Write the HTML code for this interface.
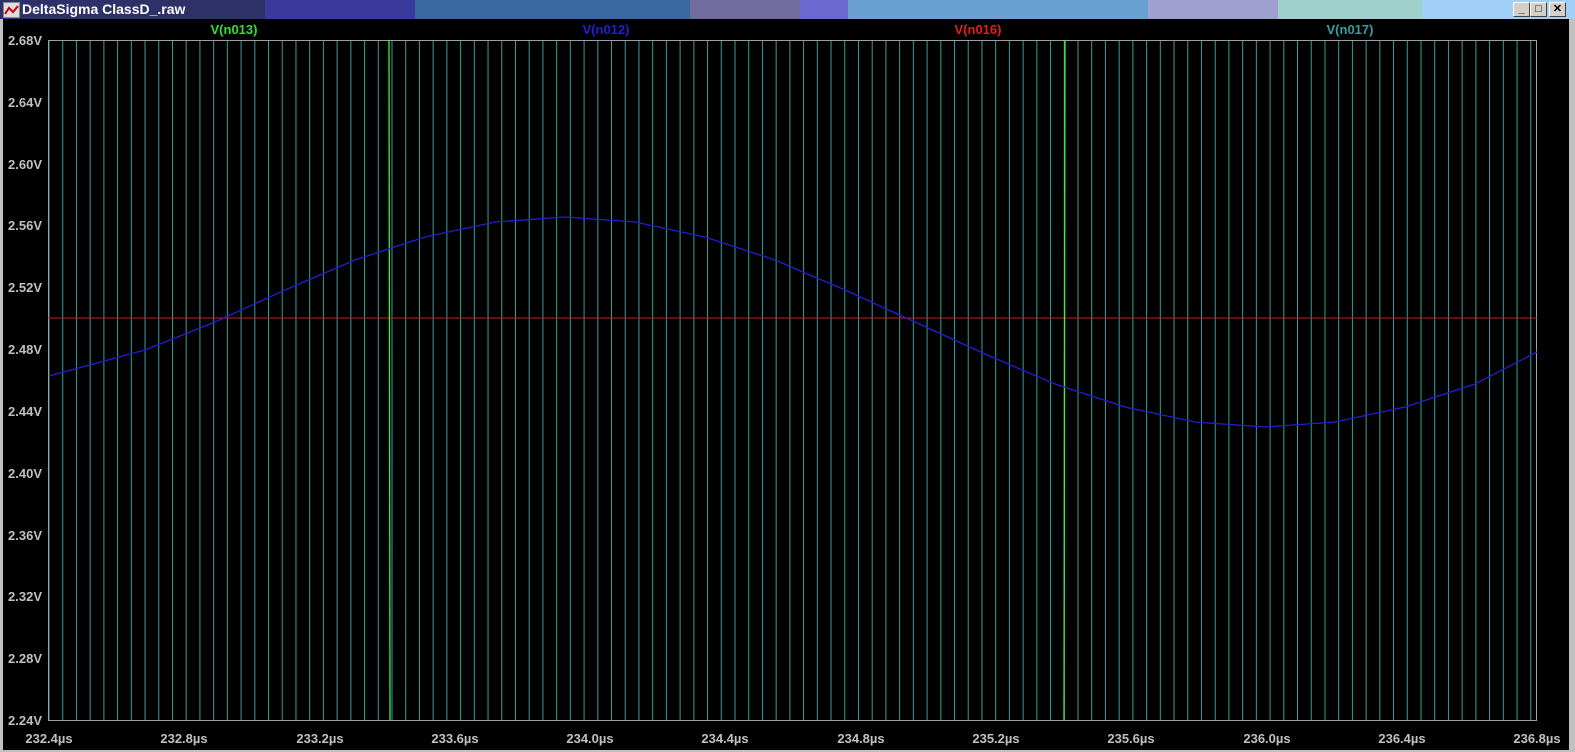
<!DOCTYPE html>
<html><head><style>
body{margin:0;width:1575px;height:752px;overflow:hidden;background:#c0c0c0;font-family:"Liberation Sans",sans-serif;}
.tb{position:absolute;top:0;height:19px;}
.t{position:absolute;font-size:14px;font-weight:bold;color:#fff;left:22px;top:1px;}
.btn{position:absolute;top:2px;width:15px;height:13px;background:#d4d0c8;border:1px solid;border-color:#fff #404040 #404040 #fff;font-size:11px;font-weight:bold;text-align:center;line-height:13px;color:#000}
</style></head><body>
<div class="tb" style="left:0;width:265px;background:#2e3068"></div>
<div class="tb" style="left:265px;width:150px;background:#3a3a9c"></div>
<div class="tb" style="left:415px;width:275px;background:#3a68a0"></div>
<div class="tb" style="left:690px;width:110px;background:#706ca0"></div>
<div class="tb" style="left:800px;width:48px;background:#6a6ad0"></div>
<div class="tb" style="left:848px;width:300px;background:#6aa0d0"></div>
<div class="tb" style="left:1148px;width:130px;background:#a0a0d0"></div>
<div class="tb" style="left:1278px;width:144px;background:#a0d0cc"></div>
<div class="tb" style="left:1422px;width:153px;background:#a0d0f8"></div>
<div style="position:absolute;left:3px;top:2px;width:15px;height:14px;background:#ddd;border:1px solid #888"><svg width="15" height="14"><polyline points="1,11 5,5 9,9 14,3" fill="none" stroke="#c00" stroke-width="2"/></svg></div>
<div class="t">DeltaSigma ClassD_.raw</div>
<div class="btn" style="left:1513px">_</div>
<div class="btn" style="left:1530px">□</div>
<div class="btn" style="left:1549px">✕</div>
<svg style="position:absolute;left:3px;top:19px" width="1566" height="731" viewBox="3 19 1566 731">
<defs><pattern id="p" x="48.5" y="0" width="13.72" height="10" patternUnits="userSpaceOnUse"><rect x="0" y="0" width="1" height="10" fill="#3a9c9c"/></pattern></defs>
<rect x="3" y="19" width="1566" height="731" fill="#000"/>
<rect x="49" y="40" width="1488" height="680" fill="url(#p)"/>
<rect x="48.5" y="40.5" width="1488" height="680" fill="none" stroke="#a0a0a0"/>
<line x1="48" y1="318" x2="1537" y2="318" stroke="#c02020"/>
<line x1="389" y1="40" x2="390" y2="720" stroke="#40f040" stroke-width="1.3"/>
<line x1="1065" y1="40" x2="1064" y2="720" stroke="#40f040" stroke-width="1.3"/>
<polyline fill="none" stroke="#2020d0" stroke-width="1.3" points="49,376 145,350 215,322 285,290 355,260 425,237 495,222 565,217 635,222 705,237 775,260 845,290 915,322 985,354 1055,384 1125,407 1195,422 1265,427 1335,422 1405,407 1475,384 1537,352"/>
<g font-size="13" font-weight="bold" fill="#c0c0c0" text-anchor="end" font-family="Liberation Sans">
<text x="42" y="45">2.68V</text><text x="42" y="107">2.64V</text><text x="42" y="169">2.60V</text><text x="42" y="230">2.56V</text><text x="42" y="292">2.52V</text><text x="42" y="354">2.48V</text><text x="42" y="416">2.44V</text><text x="42" y="478">2.40V</text><text x="42" y="540">2.36V</text><text x="42" y="601">2.32V</text><text x="42" y="663">2.28V</text><text x="42" y="725">2.24V</text>
</g>
<g font-size="13" font-weight="bold" fill="#c0c0c0" text-anchor="middle">
<text x="49" y="743">232.4µs</text><text x="184" y="743">232.8µs</text><text x="320" y="743">233.2µs</text><text x="455" y="743">233.6µs</text><text x="590" y="743">234.0µs</text><text x="725" y="743">234.4µs</text><text x="861" y="743">234.8µs</text><text x="996" y="743">235.2µs</text><text x="1131" y="743">235.6µs</text><text x="1267" y="743">236.0µs</text><text x="1402" y="743">236.4µs</text><text x="1537" y="743">236.8µs</text>
</g>
<g font-size="13" text-anchor="middle" font-weight="bold">
<text x="234" y="34" fill="#30e030">V(n013)</text><text x="606" y="34" fill="#2020d0">V(n012)</text><text x="978" y="34" fill="#e02020">V(n016)</text><text x="1350" y="34" fill="#3a9c9c">V(n017)</text>
</g>
</svg>
</body></html>
